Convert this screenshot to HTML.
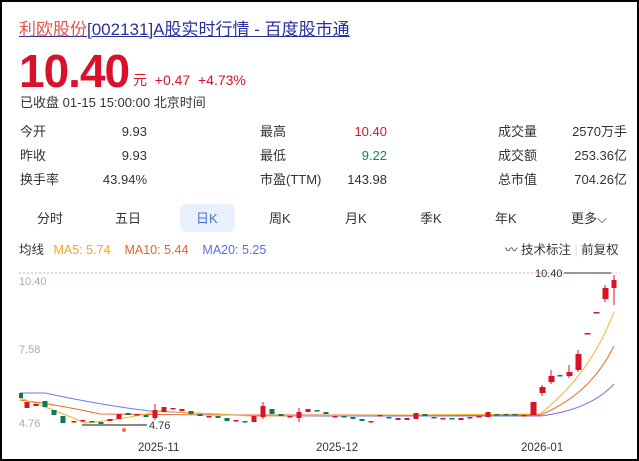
<!DOCTYPE html>
<html><head><meta charset="utf-8"><style>
body{margin:0;width:639px;height:461px;overflow:hidden;background:#fff;font-family:"Liberation Sans","Noto Sans CJK SC",sans-serif;position:relative;}
.frame{position:absolute;left:0;top:0;width:635px;height:457px;border:2px solid #000;}
.a{position:absolute;white-space:nowrap;line-height:16px;}
.t{top:20px;left:19px;font-size:17px;line-height:20px;color:#2a2fa0;text-decoration:underline;}
.t span{color:#e0554a;}
.p{top:48px;left:19px;font-size:46px;line-height:46px;font-weight:bold;color:#d9112b;letter-spacing:-1px;}
.c{top:72px;left:133px;font-size:14px;color:#d9112b;}
.s{top:95px;left:20px;font-size:13px;color:#333;}
.l{font-size:13px;color:#333;}
.v{font-size:13px;color:#333;text-align:right;width:80px;}
.tab{top:211px;font-size:13px;color:#333;}
</style></head><body>
<div class="frame"></div>
<div class="a t"><span>利欧股份</span>[002131]A股实时行情 - 百度股市通</div>
<div class="a p">10.40</div>
<div class="a c">元&nbsp; +0.47&nbsp; +4.73%</div>
<div class="a s">已收盘 01-15 15:00:00 北京时间</div>

<div class="a l" style="left:20px;top:124px">今开</div><div class="a v" style="left:67px;top:124px">9.93</div>
<div class="a l" style="left:20px;top:148px">昨收</div><div class="a v" style="left:67px;top:148px">9.93</div>
<div class="a l" style="left:20px;top:172px">换手率</div><div class="a v" style="left:67px;top:172px">43.94%</div>
<div class="a l" style="left:260px;top:124px">最高</div><div class="a v" style="left:307px;top:124px;color:#d9112b">10.40</div>
<div class="a l" style="left:260px;top:148px">最低</div><div class="a v" style="left:307px;top:148px;color:#0a8a5a">9.22</div>
<div class="a l" style="left:260px;top:172px">市盈(TTM)</div><div class="a v" style="left:307px;top:172px">143.98</div>
<div class="a l" style="left:498px;top:124px">成交量</div><div class="a v" style="left:547px;top:124px">2570万手</div>
<div class="a l" style="left:498px;top:148px">成交额</div><div class="a v" style="left:547px;top:148px">253.36亿</div>
<div class="a l" style="left:498px;top:172px">总市值</div><div class="a v" style="left:547px;top:172px">704.26亿</div>

<div class="a" style="left:180px;top:204px;width:55px;height:28px;background:#e8f1fd;border-radius:6px"></div>
<div class="a tab" style="left:37px">分时</div>
<div class="a tab" style="left:115px">五日</div>
<div class="a tab" style="left:196px;color:#4a6fd0">日K</div>
<div class="a tab" style="left:269px">周K</div>
<div class="a tab" style="left:345px">月K</div>
<div class="a tab" style="left:420px">季K</div>
<div class="a tab" style="left:495px">年K</div>
<div class="a tab" style="left:571px">更多⌵</div>

<div class="a" style="left:19px;top:242px;font-size:12.5px;color:#333">均线 <span style="color:#f5a623;margin-left:6px">MA5: 5.74</span><span style="color:#e8622c;margin-left:14px">MA10: 5.44</span><span style="color:#5b6fd6;margin-left:14px">MA20: 5.25</span></div>
<div class="a" style="left:505px;top:242px;font-size:12.5px;color:#333">〰 技术标注 <span style="color:#ddd">|</span> 前复权</div>

<svg class="a" style="left:0;top:0" width="639" height="461" font-family="Liberation Sans" font-size="11">
<line x1="19" y1="273" x2="620" y2="273" stroke="#f2a0a8" stroke-dasharray="2,2"/>
<text x="19" y="285" fill="#aaa">10.40</text>
<text x="19" y="353" fill="#aaa">7.58</text>
<text x="19" y="427" fill="#aaa">4.76</text>
<text x="138" y="451" fill="#333" font-size="11.5">2025-11</text>
<text x="316" y="451" fill="#333" font-size="11.5">2025-12</text>
<text x="521" y="451" fill="#333" font-size="11.5">2026-01</text>
<text x="535" y="277" fill="#333">10.40</text>
<line x1="564" y1="273" x2="611" y2="273" stroke="#777" stroke-width="1.5"/>
<line x1="82" y1="425" x2="147" y2="425" stroke="#888" stroke-width="2"/>
<text x="149" y="429" fill="#333">4.76</text>
<circle cx="124" cy="430" r="2" fill="#f07040"/>
<path d="M20 393 L45 393 Q100 405 150 411 L260 416 L540 416 Q590 410 614 384" fill="none" stroke="#6b7de0" stroke-width="1"/>
<path d="M20 400 Q60 405 100 414 L220 415 L540 415 Q590 395 614 346" fill="none" stroke="#ee6a2c" stroke-width="1"/>
<path d="M20 398 Q55 410 85 423 Q120 420 160 411 L250 416 L540 414 Q590 375 614 312" fill="none" stroke="#f5b325" stroke-width="1"/>
<g fill="#d9112b">
<rect x="24.5" y="402" width="5" height="6"/><rect x="33.5" y="404" width="5" height="2"/>
<rect x="71.5" y="421" width="5" height="1.5"/><rect x="80.5" y="420" width="5" height="1.5"/>
<rect x="107.5" y="419" width="5" height="2"/><rect x="116.5" y="414" width="5" height="5"/>
<rect x="134.5" y="414" width="5" height="1.5"/><rect x="152.5" y="410" width="5" height="8"/>
<rect x="161.5" y="407" width="5" height="5"/><rect x="170.5" y="408" width="5" height="1.5"/>
<rect x="179.5" y="409" width="5" height="2"/><rect x="206.5" y="416" width="5" height="1.5"/>
<rect x="233.5" y="420" width="5" height="1.5"/><rect x="251.5" y="416" width="5" height="6"/>
<rect x="260.5" y="406" width="5" height="11"/><rect x="287.5" y="416" width="5" height="1.5"/>
<rect x="296.5" y="412" width="5" height="6"/><rect x="305.5" y="409" width="5" height="3"/>
<rect x="332.5" y="416" width="5" height="1.5"/><rect x="368.5" y="421" width="5" height="1.5"/>
<rect x="377.5" y="415" width="5" height="1.5"/><rect x="395.5" y="418" width="5" height="2"/>
<rect x="404.5" y="418" width="5" height="2"/><rect x="413.5" y="413" width="5" height="6"/>
<rect x="440.5" y="418" width="5" height="1.5"/><rect x="458.5" y="418" width="5" height="2"/>
<rect x="467.5" y="417" width="5" height="1.5"/><rect x="476.5" y="416" width="5" height="1.5"/>
<rect x="485.5" y="412" width="5" height="5"/><rect x="521.5" y="415" width="5" height="1.5"/>
<rect x="530.5" y="402" width="6" height="13"/><rect x="539.5" y="387" width="6" height="6"/>
<rect x="548.5" y="376" width="6" height="6"/><rect x="566.5" y="372" width="6" height="4"/>
<rect x="575.5" y="354" width="6" height="16"/><rect x="584.5" y="333" width="6" height="1.5"/>
<rect x="593.5" y="312" width="6" height="1.5"/><rect x="602.5" y="288" width="6" height="11"/>
<rect x="611.5" y="280" width="5" height="8"/>
</g>
<g stroke="#d9112b" stroke-width="1"><line x1="542" y1="385" x2="542" y2="396"/><line x1="551" y1="370" x2="551" y2="384"/><line x1="569" y1="365" x2="569" y2="378"/><line x1="578" y1="350" x2="578" y2="372"/><line x1="605" y1="285" x2="605" y2="302"/><line x1="614" y1="275" x2="614" y2="305"/><line x1="155" y1="404" x2="155" y2="420"/><line x1="263" y1="402" x2="263" y2="419"/><line x1="299" y1="408" x2="299" y2="422"/></g>
<g fill="#0a7a5a">
<rect x="19" y="393" width="4" height="5"/><rect x="42.5" y="401" width="5" height="6"/>
<rect x="51.5" y="410" width="5" height="5"/><rect x="60.5" y="416" width="5" height="7"/>
<rect x="89.5" y="421" width="5" height="1.5"/><rect x="98.5" y="422" width="5" height="2"/>
<rect x="125.5" y="413" width="5" height="2"/><rect x="143.5" y="415" width="5" height="2"/>
<rect x="188.5" y="411" width="5" height="3"/><rect x="197.5" y="414" width="5" height="2"/>
<rect x="215.5" y="416" width="5" height="2"/><rect x="224.5" y="418" width="5" height="3"/>
<rect x="242.5" y="421" width="5" height="1.5"/><rect x="269.5" y="409" width="5" height="5"/>
<rect x="278.5" y="414" width="5" height="2"/><rect x="314.5" y="410" width="5" height="1.5"/>
<rect x="323.5" y="412" width="5" height="2"/><rect x="341.5" y="416" width="5" height="1.5"/>
<rect x="350.5" y="417" width="5" height="2"/><rect x="359.5" y="419" width="5" height="2"/>
<rect x="386.5" y="417" width="5" height="1.5"/><rect x="422.5" y="414" width="5" height="2"/>
<rect x="431.5" y="417" width="5" height="1.5"/><rect x="449.5" y="418" width="5" height="1.5"/>
<rect x="494.5" y="414" width="5" height="1.5"/><rect x="503.5" y="414" width="5" height="1.5"/>
<rect x="512.5" y="414" width="5" height="1.5"/><rect x="557.5" y="375" width="5" height="1.5"/>
</g>
</svg>
</body></html>
